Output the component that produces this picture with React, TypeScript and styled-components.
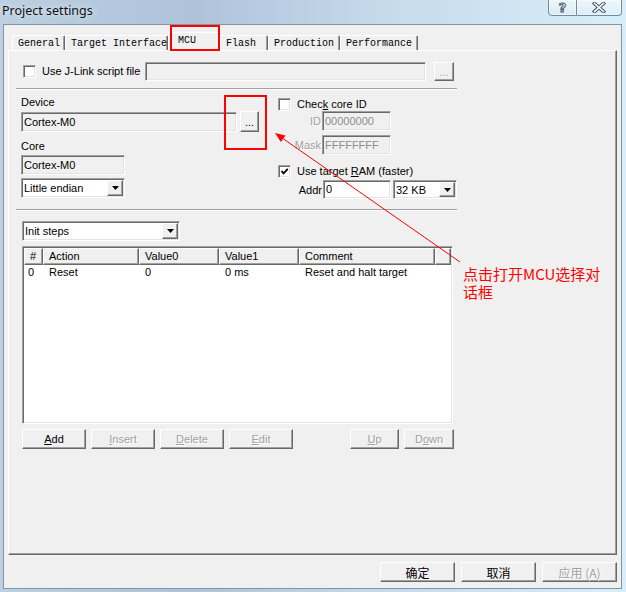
import React from "react";
import styled, { createGlobalStyle, css } from "styled-components";

const GlobalStyle = createGlobalStyle`
  html, body { margin: 0; padding: 0; }
  body {
    font-family: "Liberation Sans", Arial, sans-serif;
    font-size: 11px;
    color: #000;
  }
  * { box-sizing: border-box; }
`;

const sunken = css`
  border: 1px solid;
  border-color: #a0a0a0 #ffffff #ffffff #a0a0a0;
  box-shadow: inset 1px 1px #696969, inset -1px -1px #e3e3e3;
`;

const raised = css`
  border: 1px solid;
  border-color: #ffffff #696969 #696969 #ffffff;
  box-shadow: inset -1px -1px #a0a0a0;
`;

const Window = styled.div`
  position: relative;
  width: 626px;
  height: 592px;
  display: flex;
  flex-direction: column;
  overflow: hidden;
  background: linear-gradient(90deg, #bccfe3 0%, #aec3d9 30%, #c4d9ea 60%, #d8eff9 100%);
`;

const TitleBar = styled.div`
  height: 24px;
  flex-shrink: 0;
  display: flex;
  align-items: flex-start;
`;

const Title = styled.div`
  padding: 2px 0 0 2px;
  font-family: "Noto Sans", "Liberation Sans", sans-serif;
  font-size: 12.5px;
  line-height: 18px;
  color: #111;
  text-shadow: 0 0 6px rgba(255, 255, 255, 0.9);
`;

const CaptionButtons = styled.div`
  margin-left: auto;
  margin-right: 4px;
  margin-top: -1px;
  display: flex;
`;

const CaptionButton = styled.div<{ $w: number; $first?: boolean; $last?: boolean }>`
  width: ${(p) => p.$w}px;
  height: 17px;
  display: flex;
  align-items: center;
  justify-content: center;
  border: 1px solid #7a8898;
  border-left-width: ${(p) => (p.$first ? 1 : 0)}px;
  border-radius: ${(p) => (p.$first ? "0 0 0 4px" : p.$last ? "0 0 4px 0" : "0")};
  background: linear-gradient(180deg, rgba(255, 255, 255, 0.55), rgba(255, 255, 255, 0.15));
  box-shadow: inset 0 0 0 1px rgba(255, 255, 255, 0.45);
`;

const HelpGlyph = styled.span`
  font-family: "DejaVu Sans", sans-serif;
  font-weight: bold;
  font-size: 13px;
  line-height: 13px;
  color: #fff;
  -webkit-text-stroke: 1px #46536a;
`;

const Client = styled.div`
  flex: 1;
  margin: 0 4px 3px 3px;
  background: #f0f0f0;
  border: 1px solid #8493a5;
  display: flex;
  flex-direction: column;
`;

const TabStrip = styled.div`
  position: relative;
  z-index: 1;
  height: 19px;
  margin: 6px 0 0 8px;
  display: flex;
  align-items: flex-end;
`;

const Tab = styled.div<{ $w: number; $active?: boolean }>`
  width: ${(p) => p.$w}px;
  height: ${(p) => (p.$active ? 19 : 15)}px;
  margin-bottom: ${(p) => (p.$active ? -1 : 0)}px;
  padding: ${(p) => (p.$active ? "2px 0 0 9px" : "2px 0 0 5px")};
  font-family: "Liberation Mono", "Courier New", monospace;
  font-size: 10px;
  line-height: 12px;
  white-space: nowrap;
  background: #f0f0f0;
  border-top: 1px solid #fff;
  border-left: 1px solid #fff;
  border-right: 1px solid #696969;
  border-radius: 2px 2px 0 0;
  box-shadow: inset -1px 0 #a0a0a0;
`;

const Panel = styled.div`
  height: 505px;
  flex-shrink: 0;
  margin: 0 4px;
  background: #f0f0f0;
  border: 1px solid;
  border-color: #fff #696969 #696969 #fff;
  box-shadow: inset -1px -1px #a0a0a0;
  display: flex;
  flex-direction: column;
`;

const JLinkRow = styled.div`
  margin-top: 11px;
  padding-left: 14px;
  height: 19px;
  display: flex;
  align-items: center;
`;

const CheckLabel = styled.label<{ $w?: number; $mt?: number }>`
  ${(p) => (p.$w ? `width: ${p.$w}px;` : "")}
  margin-top: ${(p) => p.$mt ?? 0}px;
  height: 13px;
  display: flex;
  align-items: center;
  gap: 6px;
  line-height: 13px;
  white-space: nowrap;
`;

const Box = styled.span`
  width: 13px;
  height: 13px;
  flex-shrink: 0;
  background: #fff;
  ${sunken};
  display: flex;
  align-items: center;
  justify-content: center;
`;

const CheckBox: React.FC<{ checked?: boolean }> = ({ checked }) => (
  <Box>
    {checked && (
      <svg width="9" height="9" viewBox="0 0 9 9">
        <polyline points="1.5,4 3.5,6.3 7.8,1.8" fill="none" stroke="#000" strokeWidth="1.8" />
      </svg>
    )}
  </Box>
);

const Field = styled.div<{ $w: number; $h: number; $mt?: number; $white?: boolean; $disabled?: boolean }>`
  width: ${(p) => p.$w}px;
  height: ${(p) => p.$h}px;
  margin-top: ${(p) => p.$mt ?? 0}px;
  flex-shrink: 0;
  ${sunken};
  background: ${(p) => (p.$white ? "#fff" : "#f0f0f0")};
  color: ${(p) => (p.$disabled ? "#8d8d8d" : "#000")};
  padding-left: 2px;
  line-height: ${(p) => p.$h - 2}px;
  white-space: nowrap;
  overflow: hidden;
`;

const Button = styled.div<{ $w: number; $h?: number; $ml?: number; $disabled?: boolean; $cjk?: boolean }>`
  width: ${(p) => p.$w}px;
  height: ${(p) => p.$h ?? 20}px;
  margin-left: ${(p) => p.$ml ?? 0}px;
  flex-shrink: 0;
  ${raised};
  background: #f0f0f0;
  display: flex;
  align-items: center;
  justify-content: center;
  white-space: nowrap;
  color: ${(p) => (p.$disabled ? "#a0a0a0" : "#000")};
  text-shadow: ${(p) => (p.$disabled ? "1px 1px 0 #fff" : "none")};
  ${(p) =>
    p.$cjk &&
    css`
      font-family: "Noto Sans CJK SC", "Liberation Sans", sans-serif;
      font-size: 12px;
    `}
`;

const Separator = styled.div<{ $mt: number }>`
  margin: ${(p) => p.$mt}px 0 0 7px;
  width: 441px;
  height: 2px;
  flex-shrink: 0;
  border-top: 1px solid #a0a0a0;
  border-bottom: 1px solid #fff;
`;

const Columns = styled.div`
  height: 119px;
  flex-shrink: 0;
  padding-left: 12px;
  display: flex;
`;

const LeftCol = styled.div`
  width: 257px;
  display: flex;
  flex-direction: column;
`;

const RightCol = styled.div`
  width: 180px;
  display: flex;
  flex-direction: column;
`;

const Label = styled.div<{ $mt: number }>`
  margin-top: ${(p) => p.$mt}px;
  line-height: 13px;
`;

const DeviceRow = styled.div`
  margin-top: 2px;
  display: flex;
  align-items: flex-start;
  gap: 3px;
`;

const FieldRow = styled.div<{ $mt: number }>`
  margin-top: ${(p) => p.$mt}px;
  display: flex;
  align-items: center;
`;

const SideLabel = styled.div<{ $w: number; $disabled?: boolean }>`
  width: ${(p) => p.$w}px;
  padding-right: 1px;
  text-align: right;
  color: ${(p) => (p.$disabled ? "#a0a0a0" : "#000")};
  text-shadow: ${(p) => (p.$disabled ? "1px 1px 0 #fff" : "none")};
`;

const SelectBox = styled.div<{ $w: number; $h: number; $mt?: number; $ml?: number }>`
  width: ${(p) => p.$w}px;
  height: ${(p) => p.$h}px;
  margin-top: ${(p) => p.$mt ?? 0}px;
  margin-left: ${(p) => p.$ml ?? 0}px;
  flex-shrink: 0;
  ${sunken};
  background: #fff;
  padding-left: 2px;
  display: flex;
  align-items: center;
  white-space: nowrap;
`;

const DropButton = styled.span`
  margin-left: auto;
  margin-right: 1px;
  width: 16px;
  height: calc(100% - 2px);
  ${raised};
  background: #f0f0f0;
  display: flex;
  align-items: center;
  justify-content: center;
`;

const Select: React.FC<{ w: number; h: number; mt?: number; ml?: number; children: React.ReactNode }> = ({
  w,
  h,
  mt,
  ml,
  children,
}) => (
  <SelectBox $w={w} $h={h} $mt={mt} $ml={ml}>
    <span>{children}</span>
    <DropButton>
      <svg width="7" height="4" viewBox="0 0 7 4">
        <path d="M0 0h7L3.5 4z" fill="#000" />
      </svg>
    </DropButton>
  </SelectBox>
);

const Lower = styled.div`
  padding-left: 13px;
  display: flex;
  flex-direction: column;
`;

const ListView = styled.div`
  margin-top: 5px;
  width: 431px;
  height: 178px;
  ${sunken};
  background: #fff;
  padding: 1px;
  display: grid;
  grid-template-columns: 19px 96px 80px 80px 136px 16px;
  grid-template-rows: 17px 15px;
  align-content: start;
`;

const HeadCell = styled.div`
  ${raised};
  background: #f0f0f0;
  padding-left: 5px;
  line-height: 15px;
  white-space: nowrap;
`;

const Cell = styled.div<{ $pl?: number }>`
  padding-left: ${(p) => p.$pl ?? 6}px;
  line-height: 15px;
  white-space: nowrap;
`;

const ButtonRow = styled.div`
  margin-top: 5px;
  display: flex;
  gap: 5px;
`;

const Footer = styled.div`
  margin-top: 7px;
  padding-right: 4px;
  display: flex;
  justify-content: flex-end;
  gap: 6px;
`;

const RedBox = styled.div<{ $x: number; $y: number; $w: number; $h: number }>`
  position: absolute;
  left: ${(p) => p.$x}px;
  top: ${(p) => p.$y}px;
  width: ${(p) => p.$w}px;
  height: ${(p) => p.$h}px;
  border: 2px solid #ff0000;
  pointer-events: none;
  z-index: 5;
`;

const Arrow = styled.svg`
  position: absolute;
  left: 0;
  top: 0;
  pointer-events: none;
  z-index: 5;
`;

const Note = styled.div`
  position: absolute;
  left: 463px;
  top: 265px;
  width: 140px;
  color: #ff0000;
  font-family: "Noto Sans CJK SC", sans-serif;
  font-size: 15px;
  line-height: 18px;
  z-index: 5;
`;

const tabs = [
  { label: "General", w: 53 },
  { label: "Target Interface", w: 103 },
  { label: "MCU", w: 52, active: true },
  { label: "Flash", w: 48 },
  { label: "Production", w: 72 },
  { label: "Performance", w: 78 },
];

export default function App() {
  return (
    <>
      <GlobalStyle />
      <Window>
        <TitleBar>
          <Title>Project settings</Title>
          <CaptionButtons>
            <CaptionButton $w={29} $first>
              <HelpGlyph>?</HelpGlyph>
            </CaptionButton>
            <CaptionButton $w={45} $last>
              <svg width="14" height="11" viewBox="0 0 14 11">
                <path d="M2.5 1.5 L11.5 9.5 M11.5 1.5 L2.5 9.5" stroke="#46536a" strokeWidth="3.6" strokeLinecap="square" />
                <path d="M2.5 1.5 L11.5 9.5 M11.5 1.5 L2.5 9.5" stroke="#fff" strokeWidth="1.6" strokeLinecap="square" />
              </svg>
            </CaptionButton>
          </CaptionButtons>
        </TitleBar>

        <Client>
          <TabStrip>
            {tabs.map((t) => (
              <Tab key={t.label} $w={t.w} $active={t.active}>
                {t.label}
              </Tab>
            ))}
          </TabStrip>

          <Panel>
            <JLinkRow>
              <CheckLabel $w={122}>
                <CheckBox />
                <span>Use J-Link script file</span>
              </CheckLabel>
              <Field $w={281} $h={19} />
              <Button $w={20} $h={19} $ml={8} $disabled>
                ...
              </Button>
            </JLinkRow>

            <Separator $mt={7} />

            <Columns>
              <LeftCol>
                <Label $mt={6}>Device</Label>
                <DeviceRow>
                  <Field $w={216} $h={20} $mt={1}>
                    Cortex-M0
                  </Field>
                  <Button $w={19} $h={21}>
                    ...
                  </Button>
                </DeviceRow>
                <Label $mt={8}>Core</Label>
                <Field $w={104} $h={20} $mt={2}>
                  Cortex-M0
                </Field>
                <Select w={104} h={20} mt={3}>
                  Little endian
                </Select>
              </LeftCol>

              <RightCol>
                <CheckLabel $mt={8}>
                  <CheckBox />
                  <span>
                    Chec<u>k</u> core ID
                  </span>
                </CheckLabel>
                <FieldRow $mt={0}>
                  <SideLabel $w={44} $disabled>
                    ID
                  </SideLabel>
                  <Field $w={69} $h={20} $disabled>
                    00000000
                  </Field>
                </FieldRow>
                <FieldRow $mt={4}>
                  <SideLabel $w={44} $disabled>
                    Mask
                  </SideLabel>
                  <Field $w={69} $h={20} $disabled>
                    FFFFFFFF
                  </Field>
                </FieldRow>
                <CheckLabel $mt={10}>
                  <CheckBox checked />
                  <span>
                    Use target <u>R</u>AM (faster)
                  </span>
                </CheckLabel>
                <FieldRow $mt={2}>
                  <SideLabel $w={45}>Addr</SideLabel>
                  <Field $w={68} $h={19} $white>
                    0
                  </Field>
                  <Select w={64} h={19} ml={2}>
                    32 KB
                  </Select>
                </FieldRow>
              </RightCol>
            </Columns>

            <Separator $mt={0} />

            <Lower>
              <Select w={158} h={20} mt={10}>
                Init steps
              </Select>
              <ListView>
                <HeadCell>#</HeadCell>
                <HeadCell>Action</HeadCell>
                <HeadCell>Value0</HeadCell>
                <HeadCell>Value1</HeadCell>
                <HeadCell>Comment</HeadCell>
                <HeadCell />
                <Cell $pl={4}>0</Cell>
                <Cell>Reset</Cell>
                <Cell>0</Cell>
                <Cell>0 ms</Cell>
                <Cell>Reset and halt target</Cell>
                <Cell />
              </ListView>
              <ButtonRow>
                <Button $w={64}>
                  <u>A</u>dd
                </Button>
                <Button $w={64} $disabled>
                  <u>I</u>nsert
                </Button>
                <Button $w={64} $disabled>
                  <u>D</u>elete
                </Button>
                <Button $w={64} $disabled>
                  <u>E</u>dit
                </Button>
                <Button $w={49} $ml={52} $disabled>
                  <u>U</u>p
                </Button>
                <Button $w={50} $disabled>
                  D<u>o</u>wn
                </Button>
              </ButtonRow>
            </Lower>
          </Panel>

          <Footer>
            <Button $w={75} $cjk>
              确定
            </Button>
            <Button $w={75} $cjk>
              取消
            </Button>
            <Button $w={75} $cjk $disabled>
              应用 (A)
            </Button>
          </Footer>
        </Client>

        <RedBox $x={170} $y={25} $w={50} $h={26} />
        <RedBox $x={224} $y={95} $w={43} $h={55} />
        <Arrow width={626} height={592} viewBox="0 0 626 592">
          <line x1="460" y1="262" x2="280" y2="136.5" stroke="#ff0000" strokeWidth="1" />
          <polygon points="275,133 285.5,135.4 280.9,142" fill="#ff0000" />
        </Arrow>
        <Note>点击打开MCU选择对话框</Note>
      </Window>
    </>
  );
}
